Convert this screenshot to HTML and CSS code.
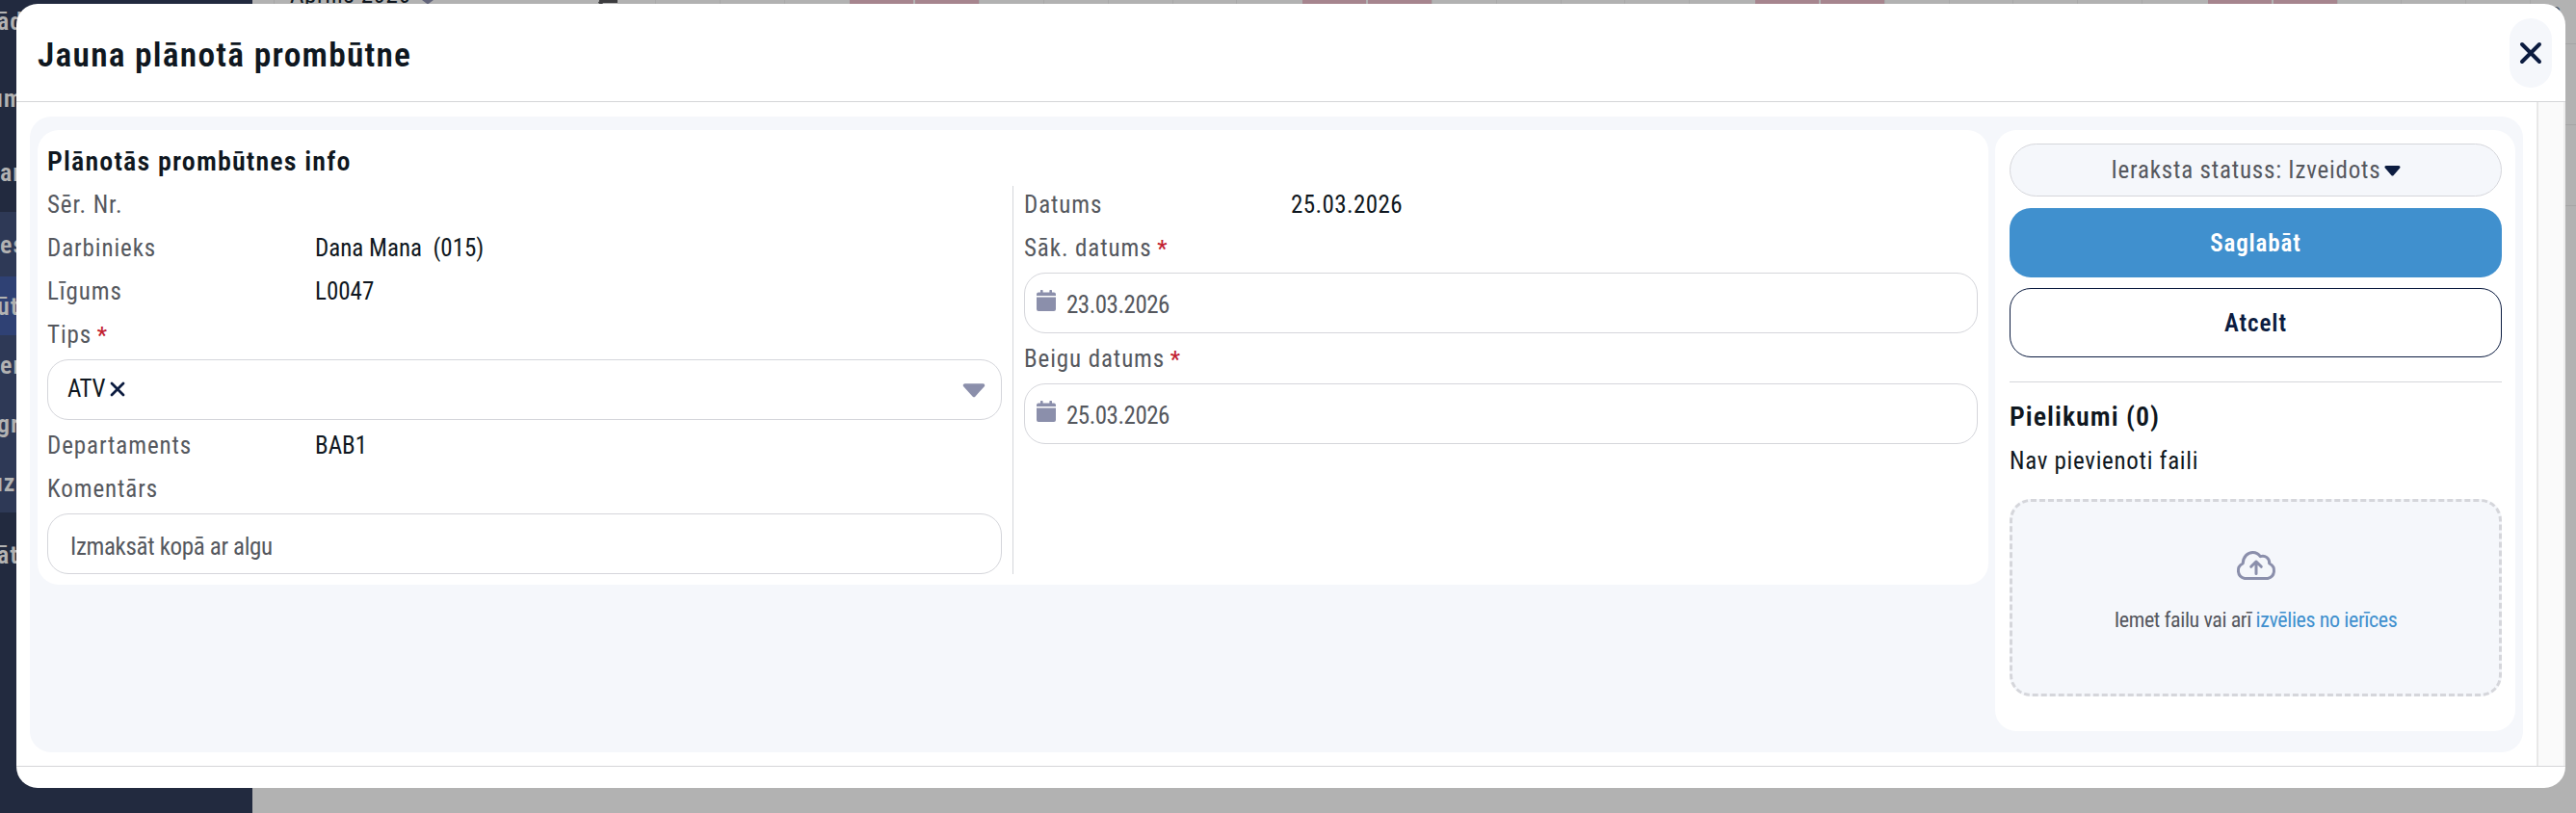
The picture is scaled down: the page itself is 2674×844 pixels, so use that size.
FILE: index.html
```html
<!DOCTYPE html>
<html lang="lv">
<head>
  <meta charset="UTF-8">
  <title>Jauna plānotā prombūtne</title>
  <link rel="stylesheet" href="styles.css">
</head>
<body>

  <!-- Lapa zem modālā loga -->
  <div class="page">
    <nav class="sidebar">
      <a class="nav-item tall"><span>ād</span></a>
      <a class="nav-item tall"><span>um</span></a>
      <a class="nav-item tall"><span>ar</span></a>
      <a class="nav-item group first"><span>es</span></a>
      <a class="nav-item active"><span>ūt</span></a>
      <a class="nav-item group"><span>er</span></a>
      <a class="nav-item group"><span>gr</span></a>
      <a class="nav-item group last"><span>uzs</span></a>
      <a class="nav-item last"><span>āt</span></a>
    </nav>
    <main class="calendar">
      <div class="month">
        <span>Aprīlis 2026</span>
        <svg width="14" height="10" viewBox="0 0 14 10"><path d="M1 0h12L7 4.500z" fill="#62647a"/></svg>
        <svg class="today" width="22" height="8" viewBox="0 0 22 8"><path d="M3 1.500h19M3 1.500l5 6" fill="none" stroke="#3c3c3e" stroke-width="3"/></svg>
      </div>
      <div class="days">
        <i></i><i></i><i></i><i class="off"></i><i class="off"></i><i></i><i></i>
        <i></i><i></i><i></i><i class="off"></i><i class="off"></i><i></i><i></i>
        <i></i><i></i><i></i><i class="off"></i><i class="off"></i><i></i><i></i>
        <i></i><i></i><i></i><i class="off"></i><i class="off"></i><i></i><i></i><i></i><i></i>
      </div>
      <div class="edge"><span>s</span><i></i><i></i><i></i></div>
    </main>
  </div>

  <!-- Modālais logs -->
  <div class="modal">
    <header class="modal-header">
      <h1>Jauna plānotā prombūtne</h1>
      <button class="close">
        <svg width="24" height="24" viewBox="0 0 24 24"><path d="M3 3l18 18M21 3L3 21" stroke="#0c1c40" stroke-width="4" stroke-linecap="round"/></svg>
      </button>
    </header>

    <div class="modal-body">
      <div class="wrapper">
        <section class="card info">
          <h2>Plānotās prombūtnes info</h2>
          <div class="columns">
            <div class="column">
              <div class="row"><label>Sēr. Nr.</label></div>
              <div class="row"><label>Darbinieks</label><span>Dana Mana&nbsp; (015)</span></div>
              <div class="row"><label>Līgums</label><span>L0047</span></div>
              <div class="row"><label>Tips <b>*</b></label></div>
              <div class="field select">
                <span>ATV</span>
                <svg width="16" height="16" viewBox="0 0 16 16"><path d="M2 2l12 12M14 2L2 14" stroke="#0c1c40" stroke-width="2.8" stroke-linecap="round"/></svg>
                <svg class="caret" width="24" height="15" viewBox="0 0 24 15"><path d="M2.500 2h19L12 12.500z" fill="#8b8fab" stroke="#8b8fab" stroke-width="3.500" stroke-linejoin="round"/></svg>
              </div>
              <div class="row"><label>Departaments</label><span>BAB1</span></div>
              <div class="row"><label>Komentārs</label></div>
              <div class="field comment">Izmaksāt kopā ar algu</div>
            </div>

            <div class="column">
              <div class="row"><label>Datums</label><span class="date">25.03.2026</span></div>
              <div class="row"><label>Sāk. datums <b>*</b></label></div>
              <div class="field picker">
                <svg width="20" height="22" viewBox="0 0 20 22"><path d="M0 6V4.500a2 2 0 0 1 2-2h2V1a1.300 1.300 0 0 1 2.600 0v1.500h6.800V1a1.300 1.300 0 0 1 2.600 0v1.500h2a2 2 0 0 1 2 2V6zM0 7.500h20V20a2 2 0 0 1-2 2H2a2 2 0 0 1-2-2z" fill="#8b8fab"/></svg>
                <span>23.03.2026</span>
              </div>
              <div class="row"><label>Beigu datums <b>*</b></label></div>
              <div class="field picker">
                <svg width="20" height="22" viewBox="0 0 20 22"><path d="M0 6V4.500a2 2 0 0 1 2-2h2V1a1.300 1.300 0 0 1 2.600 0v1.500h6.800V1a1.300 1.300 0 0 1 2.600 0v1.500h2a2 2 0 0 1 2 2V6zM0 7.500h20V20a2 2 0 0 1-2 2H2a2 2 0 0 1-2-2z" fill="#8b8fab"/></svg>
                <span>25.03.2026</span>
              </div>
            </div>
          </div>
        </section>

        <aside class="card side">
          <div class="status">
            <span>Ieraksta statuss: Izveidots</span>
            <svg width="17" height="12" viewBox="0 0 17 12"><path d="M2 2.500h13L8.500 10z" fill="#0c1c40" stroke="#0c1c40" stroke-width="3" stroke-linejoin="round"/></svg>
          </div>
          <button class="btn save">Saglabāt</button>
          <button class="btn cancel">Atcelt</button>
          <hr>
          <h2>Pielikumi (0)</h2>
          <p class="empty">Nav pievienoti faili</p>
          <div class="drop">
            <svg width="42" height="32" viewBox="0 0 42 32" fill="none" stroke="#8b8fab" stroke-width="3" stroke-linecap="round" stroke-linejoin="round"><path d="M9 29.500A8.200 8.200 0 0 1 7.200 14C7.500 7 12 2.500 17.500 2.500c3.500 0 6 1.500 7.800 4.200 5-1.700 9.700 1.800 9.400 7.300A8.200 8.200 0 0 1 33 29.500z"/><path d="M21 24.500V12M15.700 17.300L21 12l5.300 5.300"/></svg>
            <p>Iemet failu vai arī <a>izvēlies no ierīces</a></p>
          </div>
        </aside>
      </div>
      <div class="scrollbar"></div>
    </div>

    <footer class="modal-footer"></footer>
  </div>

</body>
</html>
```

FILE: styles.css
```css
html, body {
  margin: 0;
  padding: 0;
  height: 100%;
  overflow: hidden;
  font-family: Roboto, sans-serif;
  font-stretch: 75%;
  font-size: 25px;
  color: #0f1720;
}

* {
  box-sizing: border-box;
}

svg {
  display: block;
  flex: none;
}

h1, h2, p {
  margin: 0;
}

button {
  font: inherit;
  font-stretch: 75%;
  border: none;
  padding: 0;
}

/* Fons */
.page {
  display: flex;
  height: 844px;
  background: #b2b2b2;
}

.sidebar {
  width: 262px;
  background: #222a3f;
  color: #b2b2b2;
  font-size: 26px;
  font-weight: 600;
  display: flex;
  flex-direction: column;
}

.nav-item {
  height: 61px;
  display: flex;
  align-items: center;
  flex: none;
}

/* teksts sākas pa kreisi no ekrāna malas */
.nav-item span {
  margin-left: -3px;
  letter-spacing: 1px;
}

.nav-item:nth-child(2) span,
.nav-item:nth-child(8) span {
  margin-left: -10px;
}

.nav-item:nth-child(3) span,
.nav-item:nth-child(4) span,
.nav-item:nth-child(6) span {
  margin-left: 0;
}

.tall {
  height: 77px;
  padding-bottom: 6px;
}

.tall:first-child {
  height: 66px;
  padding-bottom: 22px;
}

.group {
  background: #2e3956;
}

.first {
  height: 67px;
}

.active {
  background: #2f4174;
}

.last {
  height: 62px;
}

.nav-item.last:last-child {
  height: 88px;
}

.calendar {
  flex: 1;
  display: flex;
  align-items: flex-start;
}

.month {
  width: 418px;
  height: 4px;
  margin-left: 22px;
  margin-right: -22px;
  padding-left: 16px;
  border-left: 1px solid #a5a5a5;
  display: flex;
  gap: 11px;
  letter-spacing: .6px;
}

.month span {
  line-height: 30px;
  margin-top: -20px;
}

.today {
  margin-left: 157px;
}

.days {
  display: flex;
  height: 4px;
  width: 2013px;
}

.days i {
  flex: 1;
  border-left: 1px solid #a8a8a8;
}

.days .off {
  background: #a6858e;
  border-left: 2px solid #b2b2b2;
}

.edge {
  margin-left: -46px;
  width: 27px;
  display: flex;
  flex-direction: column;
  color: #444;
}

.edge span {
  height: 45px;
  line-height: 25px;
}

.edge i {
  height: 84px;
  border-top: 1px solid #a5a5a5;
}

/* Modālais logs */
.modal {
  position: absolute;
  left: 17px;
  top: 4px;
  width: 2646px;
  height: 814px;
  background: #fff;
  border-radius: 22px;
  overflow: hidden;
  display: flex;
  flex-direction: column;
}

.modal-header {
  height: 102px;
  flex: none;
  padding: 0 14px 0 22px;
  border-bottom: 1px solid #d5d6d8;
  display: flex;
  align-items: center;
  justify-content: space-between;
}

h1 {
  font-size: 35.5px;
  font-weight: 600;
  letter-spacing: 1.2px;
  padding-top: 5px;
}

.close {
  width: 44px;
  height: 72px;
  border-radius: 22px;
  background: #f5f7fb;
  display: flex;
  align-items: center;
  justify-content: center;
}

.modal-body {
  flex: 1;
  display: flex;
  justify-content: space-between;
  padding-left: 14px;
}

.wrapper {
  width: 2588px;
  height: 660px;
  margin-top: 15px;
  padding: 14px 8px;
  background: #f5f7fb;
  border-radius: 22px;
  display: flex;
  align-items: flex-start;
  gap: 7px;
}

.scrollbar {
  width: 30px;
  background: #fafafa;
  border-left: 2px solid #e8e8e8;
  border-right: 2px solid #ededed;
}

.modal-footer {
  height: 23px;
  flex: none;
  border-top: 1px solid #d5d6d8;
}

.card {
  background: #fff;
  border-radius: 22px;
}

.info {
  width: 2025px;
  height: 472px;
  padding: 10px 11px 10px 10px;
}

h2 {
  font-size: 28px;
  font-weight: 600;
  line-height: 45px;
  letter-spacing: 1.15px;
}

.columns {
  display: grid;
  grid-template-columns: 1fr 1fr;
}

.column:first-child {
  padding-right: 11px;
}

.column:last-child {
  padding-left: 11px;
  border-left: 1px solid #d5d6db;
  margin-top: 3px;
}

.column:last-child .row:first-child {
  height: 42px;
  line-height: 39px;
}

.row {
  height: 45px;
  line-height: 45px;
  display: flex;
}

.row label {
  width: 278px;
  color: #55585e;
  letter-spacing: .9px;
}

.column:last-child .row label {
  width: 277px;
}

.row .date {
  letter-spacing: .4px;
}

.row b {
  color: #c22232;
  font-size: 23px;
  font-weight: 500;
  margin-left: -1px;
}

.field {
  height: 63px;
  margin: 3px 0 4px;
  border: 1px solid #d5d6db;
  border-radius: 22px;
  display: flex;
  align-items: center;
  color: #55585e;
}

.select {
  color: #0f1720;
  padding: 0 16px 2px 20px;
  gap: 5px;
  letter-spacing: -.3px;
}

.select .caret {
  margin-left: auto;
  margin-top: 3px;
}

.comment {
  padding: 5px 0 0 23px;
  margin-bottom: 0;
  letter-spacing: -.35px;
}

.picker {
  padding: 4px 0 0 12px;
  gap: 11px;
  letter-spacing: -.5px;
}

.picker svg {
  margin-bottom: 9px;
}

/* Labā kolonna */
.side {
  width: 540px;
  height: 624px;
  padding: 14px 14px 0 15px;
}

.status {
  height: 55px;
  background: #f5f7fb;
  border: 1px solid #d5d6db;
  border-radius: 28px;
  display: flex;
  align-items: center;
  justify-content: center;
  gap: 3px;
  color: #55585e;
  letter-spacing: .8px;
}

.btn {
  display: block;
  width: 100%;
  height: 72px;
  border-radius: 22px;
  font-weight: 600;
  letter-spacing: .9px;
}

.save {
  margin-top: 12px;
  background: #4090ce;
  color: #fff;
}

.cancel {
  margin-top: 11px;
  background: #fff;
  color: #0c1c40;
  border: 1px solid #0c1c40;
}

hr {
  border: none;
  border-top: 1px solid #d5d6db;
  margin: 25px 0 13px;
}

.side h2 {
  letter-spacing: 1px;
}

.empty {
  line-height: 45px;
  padding-top: 1px;
  letter-spacing: .7px;
}

.drop {
  height: 205px;
  margin-top: 17px;
  background: #f5f7fb;
  border: 3px dashed #d5d6db;
  border-radius: 22px;
  display: flex;
  flex-direction: column;
  align-items: center;
  padding-top: 50px;
  color: #55585e;
  font-size: 22px;
  letter-spacing: -.4px;
}

.drop p {
  margin-top: 28px;
}

.drop a {
  color: #4090ce;
}
```
